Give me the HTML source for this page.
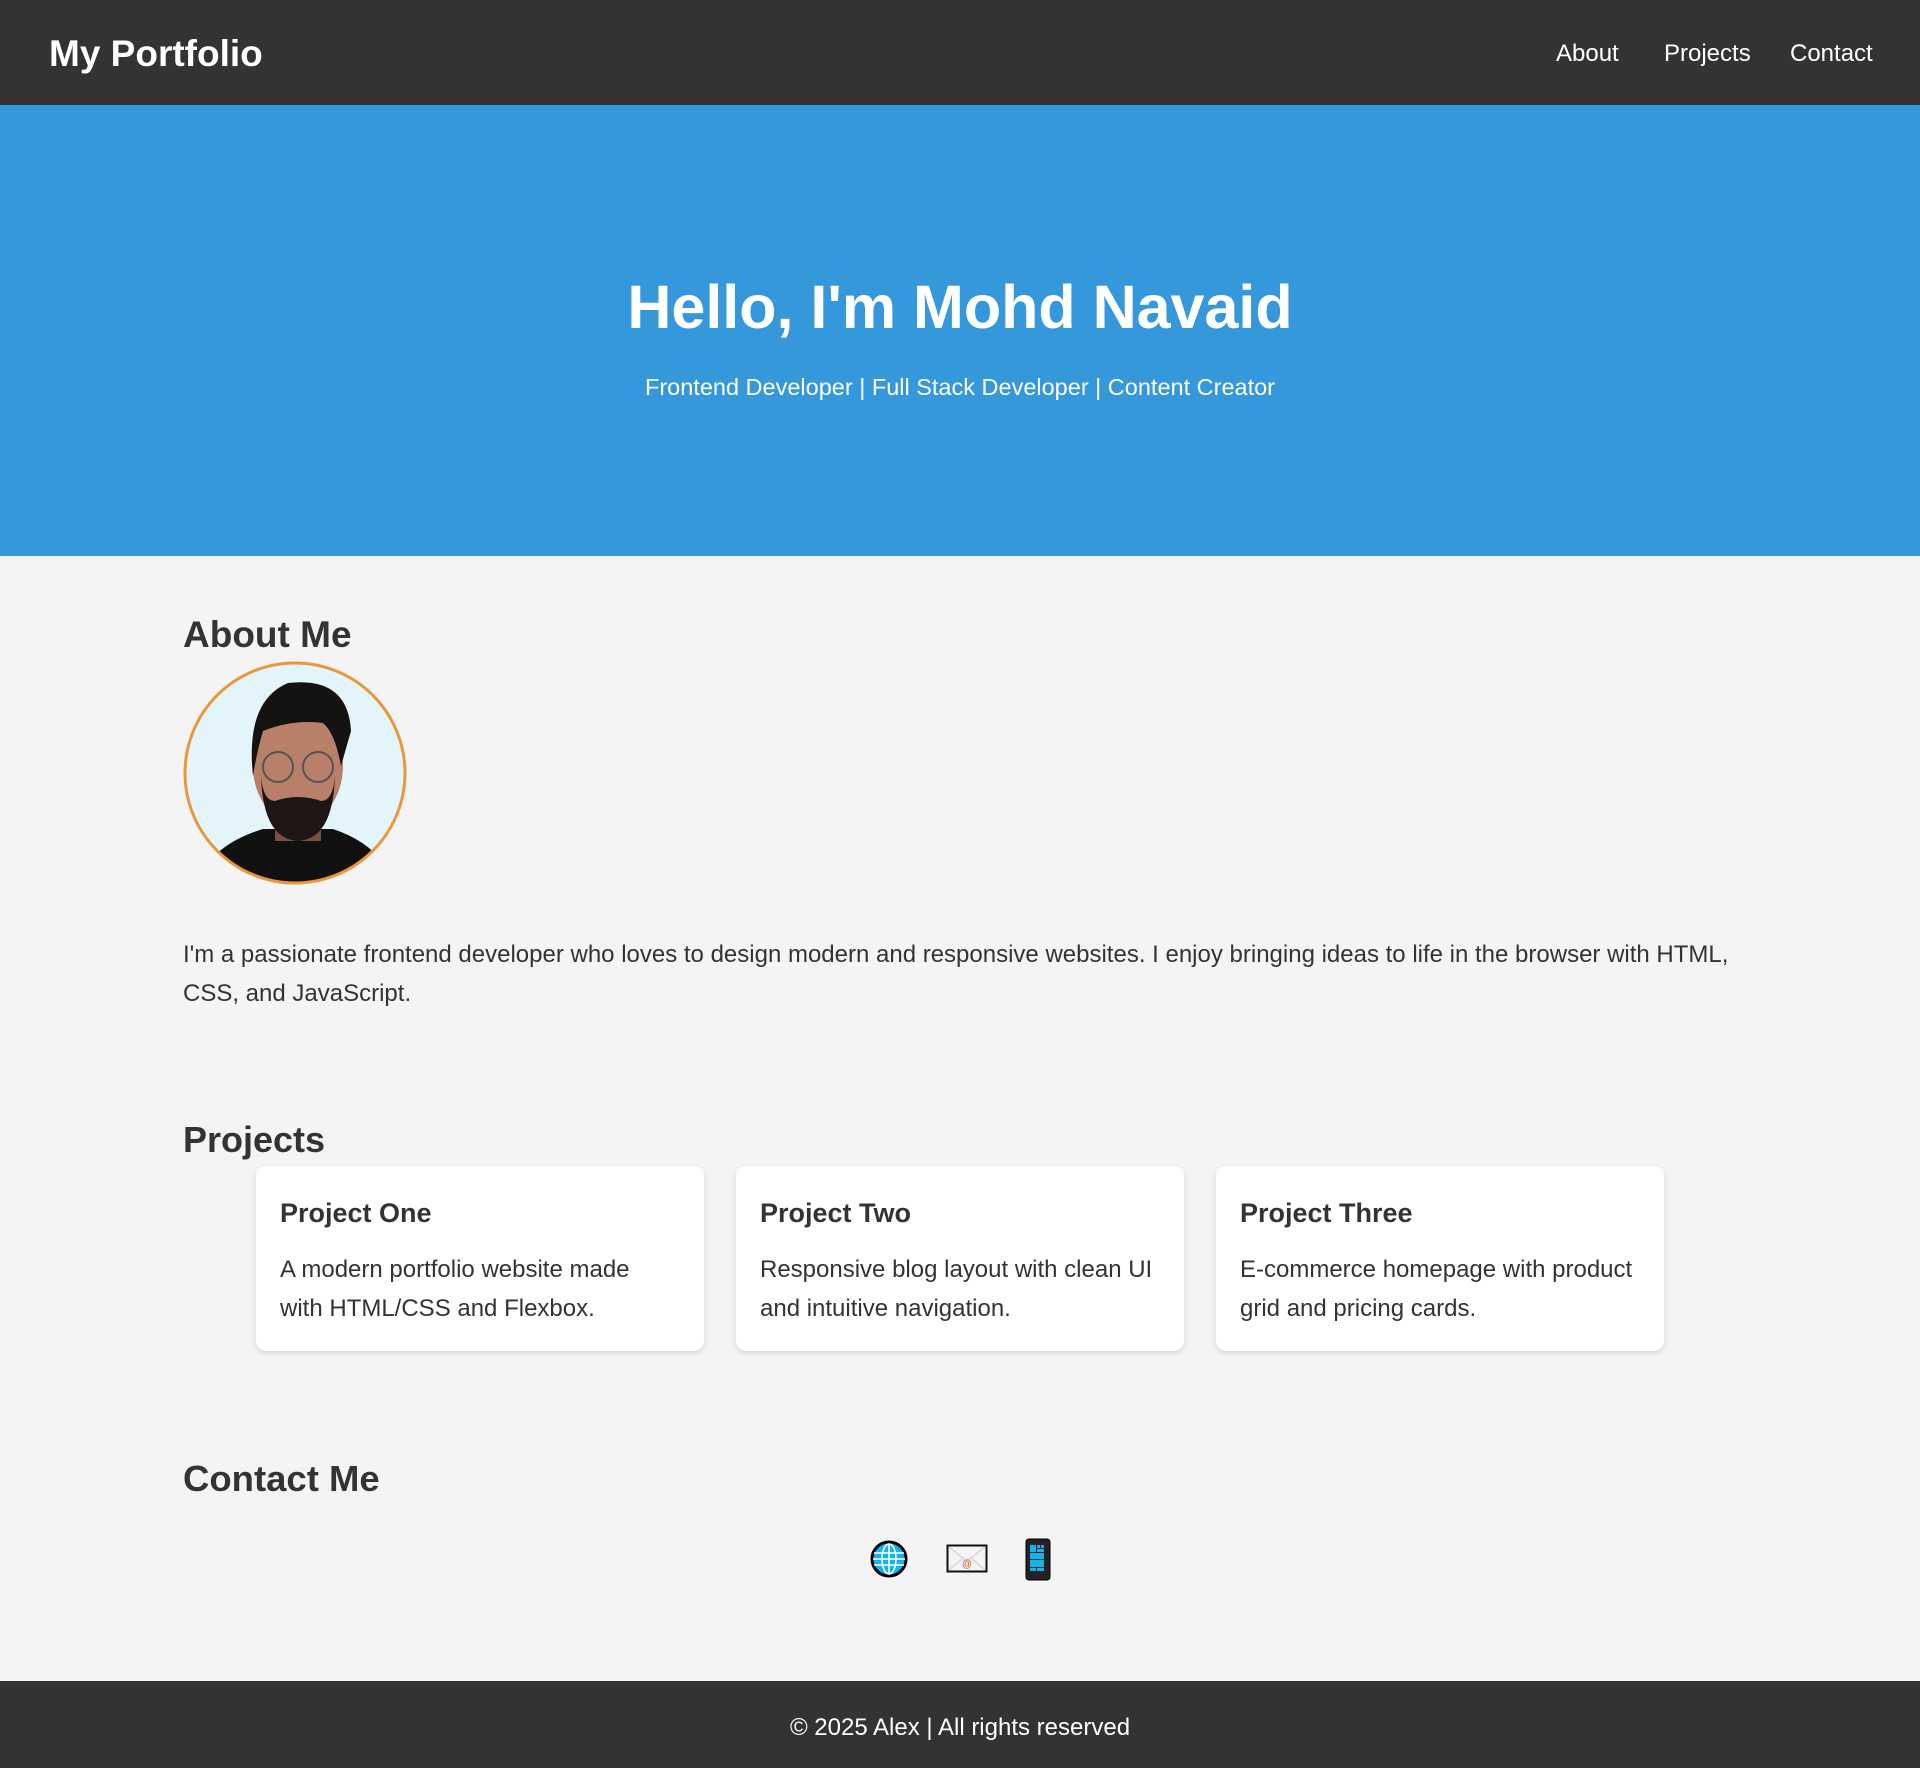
<!DOCTYPE html>
<html><head><meta charset="utf-8"><style>
*{margin:0;padding:0;box-sizing:border-box}
body{width:1920px;height:1768px;background:#f4f4f4;font-family:"Liberation Sans",sans-serif;color:#333;position:relative;overflow:hidden}
.a{position:absolute;white-space:nowrap}
header{position:absolute;left:0;top:0;width:1920px;height:105px;background:#333}
.hero{position:absolute;left:0;top:105px;width:1920px;height:451px;background:#3498db}
footer{position:absolute;left:0;top:1681px;width:1920px;height:87px;background:#333}
.card{position:absolute;top:1166px;width:448px;height:185px;background:#fff;border-radius:10px;box-shadow:0 2px 6px rgba(0,0,0,.12)}
.card h3{position:absolute;left:24px;top:32px;font-size:27px;font-weight:bold}
.card p{position:absolute;left:24px;top:84px;font-size:24px;line-height:39px;white-space:nowrap}
h2{position:absolute;left:183px;font-size:37px;font-weight:bold;white-space:nowrap}
</style></head><body>
<header>
<div class="a" style="left:49px;top:33px;font-size:37px;font-weight:bold;color:#fff">My Portfolio</div>
<div class="a" style="left:1556px;top:40px;font-size:24px;color:#fff">About</div>
<div class="a" style="left:1664px;top:40px;font-size:24px;color:#fff">Projects</div>
<div class="a" style="left:1790px;top:40px;font-size:24px;color:#fff">Contact</div>
</header>
<div class="hero">
<div class="a" style="left:0;width:1920px;text-align:center;top:167px;font-size:61px;font-weight:bold;color:#fff">Hello, I'm Mohd Navaid</div>
<div class="a" style="left:0;width:1920px;text-align:center;top:269px;font-size:23.5px;color:#fff">Frontend Developer | Full Stack Developer | Content Creator</div>
</div>
<h2 style="top:614px">About Me</h2>
<svg class="a" style="left:183px;top:661px" width="224" height="224" viewBox="0 0 224 224">
<defs><clipPath id="c"><circle cx="112" cy="112" r="109"/></clipPath></defs>
<g clip-path="url(#c)">
<rect width="224" height="224" fill="#e3f4fb"/>
<path d="M15 224 Q25 185 80 168 L150 168 Q200 185 210 224Z" fill="#111"/>
<rect x="92" y="140" width="46" height="40" fill="#7a5040"/>
<ellipse cx="115" cy="105" rx="45" ry="58" fill="#b88068"/>
<path d="M70 115 Q62 40 105 22 Q165 15 168 70 L158 105 Q152 72 140 62 Q110 58 80 70 Q74 90 70 115Z" fill="#151212"/>
<path d="M78 115 Q80 178 115 180 Q150 178 152 115 Q150 140 138 140 Q115 132 92 140 Q80 140 78 115Z" fill="#1d1614"/>
<circle cx="95" cy="106" r="15" fill="none" stroke="#555" stroke-width="2"/>
<circle cx="135" cy="106" r="15" fill="none" stroke="#555" stroke-width="2"/>
</g>
<circle cx="112" cy="112" r="110" fill="none" stroke="#e8983a" stroke-width="3"/>
</svg>
<div class="a" style="left:183px;top:935px;font-size:24px;line-height:39px">I'm a passionate frontend developer who loves to design modern and responsive websites. I enjoy bringing ideas to life in the browser with HTML,<br>CSS, and JavaScript.</div>
<h2 style="top:1119px;font-size:36px">Projects</h2>
<div class="card" style="left:256px"><h3>Project One</h3><p>A modern portfolio website made<br>with HTML/CSS and Flexbox.</p></div>
<div class="card" style="left:736px"><h3>Project Two</h3><p>Responsive blog layout with clean UI<br>and intuitive navigation.</p></div>
<div class="card" style="left:1216px"><h3>Project Three</h3><p>E-commerce homepage with product<br>grid and pricing cards.</p></div>
<h2 style="top:1458px;font-size:36.5px">Contact Me</h2>
<svg class="a" style="left:869px;top:1539px" width="40" height="40" viewBox="0 0 40 40">
<circle cx="20" cy="20" r="17" fill="#12b4ec" stroke="#000" stroke-width="3"/>
<g stroke="#fff" stroke-width="1.6" fill="none"><ellipse cx="20" cy="20" rx="7" ry="15"/><line x1="20" y1="5" x2="20" y2="35"/><line x1="5" y1="14" x2="35" y2="14"/><line x1="4" y1="20" x2="36" y2="20"/><line x1="5" y1="26" x2="35" y2="26"/></g>
</svg>
<svg class="a" style="left:946px;top:1544px" width="42" height="30" viewBox="0 0 42 30">
<rect x="1.5" y="1.5" width="39" height="26" fill="#f4f4f4" stroke="#111" stroke-width="2"/>
<path d="M3 3 L21 17 L39 3 M3 26 L17 14 M39 26 L25 14" stroke="#ccc" stroke-width="1" fill="none"/>
<text x="21" y="23" font-size="10" fill="#e64a2e" text-anchor="middle" font-family="Liberation Sans">@</text>
</svg>
<svg class="a" style="left:1025px;top:1538px" width="26" height="43" viewBox="0 0 26 43">
<rect x="1" y="1" width="24" height="41" rx="3" fill="#222" stroke="#000"/>
<rect x="5" y="7" width="6" height="7" fill="#12b4ec"/><rect x="12" y="7" width="3" height="3" fill="#12b4ec"/><rect x="16" y="7" width="3" height="3" fill="#12b4ec"/><rect x="12" y="11" width="7" height="3" fill="#12b4ec"/>
<rect x="5" y="15" width="14" height="6" fill="#12b4ec"/><rect x="5" y="22" width="14" height="7" fill="#12b4ec"/><rect x="5" y="30" width="6" height="3" fill="#12b4ec"/><rect x="12" y="30" width="7" height="3" fill="#12b4ec"/>
</svg>
<footer><div class="a" style="left:0;width:1920px;text-align:center;top:33px;font-size:24px;color:#fff">© 2025 Alex | All rights reserved</div></footer>
</body></html>
